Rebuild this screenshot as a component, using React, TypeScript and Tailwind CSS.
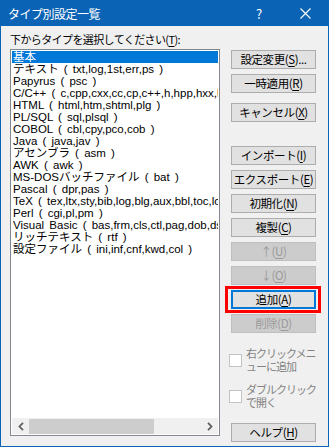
import { ReactNode } from "react";

const items = [
  "基本",
  "テキスト ( txt,log,1st,err,ps )",
  "Papyrus ( psc )",
  "C/C++ ( c,cpp,cxx,cc,cp,c++,h,hpp,hxx,hh,hxx,inl )",
  "HTML ( html,htm,shtml,plg )",
  "PL/SQL ( sql,plsql )",
  "COBOL ( cbl,cpy,pco,cob )",
  "Java ( java,jav )",
  "アセンブラ ( asm )",
  "AWK ( awk )",
  "MS-DOSバッチファイル ( bat )",
  "Pascal ( dpr,pas )",
  "TeX ( tex,ltx,sty,bib,log,blg,aux,bbl,toc,lof,lot,idx,ind,glo )",
  "Perl ( cgi,pl,pm )",
  "Visual Basic ( bas,frm,cls,ctl,pag,dob,dsr,vb )",
  "リッチテキスト ( rtf )",
  "設定ファイル ( ini,inf,cnf,kwd,col )",
];

const U = ({ c }: { c: string }) => <span className="underline underline-offset-[2px]">{c}</span>;

function Btn({ children, disabled, className = "" }: { children: ReactNode; disabled?: boolean; className?: string }) {
  return (
    <div
      className={`h-[19px] w-[85px] flex items-center justify-center whitespace-nowrap text-[11.5px] tracking-[-0.4px] leading-none ${
        disabled ? "bg-[#cccccc] border border-[#bfbfbf] text-[#9a9a9a]" : "bg-[#e1e1e1] border border-[#adadad] text-black"
      } ${className}`}
    >
      {children}
    </div>
  );
}

function Check({ lines }: { lines: string[] }) {
  return (
    <div className="flex items-center gap-[4px] ml-[-2px]">
      <div className="w-[13px] h-[13px] bg-white border border-[#c3c3c3] shrink-0" />
      <div className="text-[11px] leading-[13px] tracking-[-1px] text-[#838383]">
        {lines.map((l) => (
          <div key={l} className="h-[13px]">{l}</div>
        ))}
      </div>
    </div>
  );
}

export default function App() {
  return (
    <div className="w-[329px] h-[447px] flex flex-col border border-[#0b63b5] bg-[#f0f0f0] font-['Noto_Sans_CJK_JP',sans-serif] overflow-hidden">
      {/* title bar */}
      <div className="h-[25px] bg-[#0b63b5] flex items-center text-white shrink-0">
        <div className="pl-[7px] text-[12px] tracking-[-0.5px] flex-1">タイプ別設定一覧</div>
        <div className="w-[46px] text-center text-[13px]">?</div>
        <div className="w-[46px] flex justify-center">
          <svg width="11" height="11" viewBox="0 0 11 11">
            <path d="M0.5 0.5 L10.5 10.5 M10.5 0.5 L0.5 10.5" stroke="white" strokeWidth="1.1" />
          </svg>
        </div>
      </div>

      {/* body */}
      <div className="flex flex-1 pl-[9px]">
        <div className="flex flex-col w-[210px]">
          <div className="mt-[5px] h-[16px] text-[11px] leading-[16px] tracking-[-0.6px] text-black whitespace-nowrap">
            下からタイプを選択してください(<U c="T" />):
          </div>
          <div className="mt-[2px] h-[387px] border border-[#828790] bg-white p-[1px] flex flex-col overflow-hidden">
            <div className="flex-1 overflow-hidden font-['Liberation_Sans','Noto_Sans_CJK_JP',sans-serif]">
              {items.map((it, i) => (
                <div
                  key={it}
                  className={`h-[12px] leading-[12px] pl-[1px] text-[11.5px] [word-spacing:2px] whitespace-nowrap ${
                    i === 0 ? "bg-[#0078d7] text-white" : "text-black"
                  }`}
                >
                  {it}
                </div>
              ))}
            </div>
            <div className="h-[16px] bg-[#f0f0f0] flex items-center shrink-0">
              <div className="w-[17px] flex justify-center">
                <svg width="6" height="9" viewBox="0 0 6 9">
                  <path d="M5 0.8 L1.5 4.5 L5 8.2" fill="none" stroke="#606060" strokeWidth="1.8" />
                </svg>
              </div>
              <div className="w-[125px] h-[15px] bg-[#cdcdcd]" />
              <div className="flex-1" />
              <div className="w-[17px] flex justify-center">
                <svg width="6" height="9" viewBox="0 0 6 9">
                  <path d="M1 0.8 L4.5 4.5 L1 8.2" fill="none" stroke="#606060" strokeWidth="1.8" />
                </svg>
              </div>
            </div>
          </div>
        </div>

        <div className="ml-[11px] mt-[24px] flex flex-col">
          <Btn>
            設定変更(<U c="S" />)...
          </Btn>
          <Btn className="mt-[5px]">
            一時適用(<U c="R" />)
          </Btn>
          <Btn className="mt-[10px]">
            キャンセル(<U c="X" />)
          </Btn>
          <Btn className="mt-[24px]">
            インポート(<U c="I" />)
          </Btn>
          <Btn className="mt-[5px]">
            エクスポート(<U c="E" />)
          </Btn>
          <Btn className="mt-[5px]">
            初期化(<U c="N" />)
          </Btn>
          <Btn className="mt-[5px]">
            複製(<U c="C" />)
          </Btn>
          <Btn className="mt-[5px]" disabled>
            ↑(<U c="U" />)
          </Btn>
          <Btn className="mt-[5px]" disabled>
            ↓(<U c="O" />)
          </Btn>
          <div className="relative mt-[5px]">
            <div className="h-[19px] w-[85px] flex items-center justify-center whitespace-nowrap text-[11.5px] tracking-[-0.4px] leading-none bg-[#e1e1e1] border-2 border-[#0078d7] text-black">
              追加(<U c="A" />)
            </div>
            <div className="absolute -left-[6px] -top-[4px] -right-[5px] -bottom-[4px] border-[3px] border-[#ff0000]" />
          </div>
          <Btn className="mt-[5px]" disabled>
            削除(<U c="D" />)
          </Btn>
          <div className="mt-[14px]">
            <Check lines={["右クリックメニ", "ューに追加"]} />
          </div>
          <div className="mt-[10px]">
            <Check lines={["ダブルクリック", "で開く"]} />
          </div>
          <Btn className="mt-[14px]">
            ヘルプ(<U c="H" />)
          </Btn>
        </div>
      </div>
    </div>
  );
}
